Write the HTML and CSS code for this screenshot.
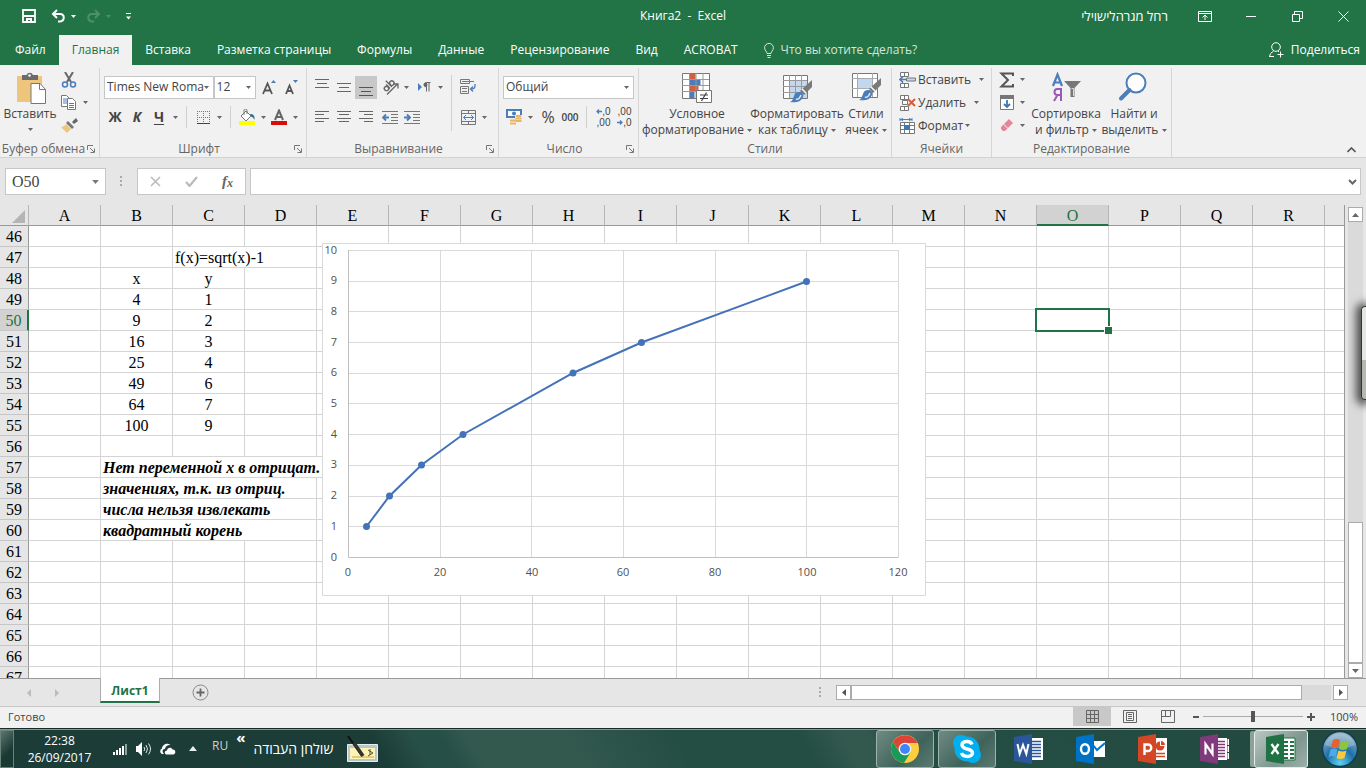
FILE: index.html
```html
<!DOCTYPE html>
<html lang="ru">
<head>
<meta charset="utf-8">
<title>Книга2 - Excel</title>
<link rel="stylesheet" href="styles.css">
</head>
<body>
<svg class="defs" width="0" height="0" aria-hidden="true">
  <defs>
    <symbol id="car" viewBox="0 0 5 3"><path d="M0 0h5L2.500 3z" fill="currentColor"/></symbol>
    <symbol id="launch" viewBox="0 0 8 8"><path d="M.5 5V.5H6M3 3l4 4M7.500 3.500v4h-4" fill="none" stroke="#777"/></symbol>
    <symbol id="brush" viewBox="0 0 24 24"><path d="M23 0v7l-8 8-4-4z" fill="#7a7a7a"/><path d="M13 9l4 4" stroke="#fff" stroke-width="1.500"/><path d="M10 12c3 0 5 2 4 5-2 5-8 6-13 5 3-1 3-4 4-6 1-3 2-4 5-4z" fill="#4a7ebb"/><path d="M7 19c2 1 4-1 5-4" fill="none" stroke="#dce8f5" stroke-width="1.500"/></symbol>
  </defs>
</svg>

<header class="titlebar">
  <div class="qat">
    <button aria-label="Сохранить"><svg width="14" height="14" viewBox="0 0 14 14"><path d="M1 1h12v12H1zM1 7h12" fill="none" stroke="#fff" stroke-width="1.800"/><path d="M4 9h6v5H8v-3H6v3H4z" fill="#fff"/></svg></button>
    <button aria-label="Отменить"><svg width="15" height="14" viewBox="0 0 15 14"><path d="M6 1L2 5l4 4M2 5h7c5 0 5 7 0 7.500H7" fill="none" stroke="#fff" stroke-width="2"/></svg></button>
    <button class="mini" aria-label="Список отмены"><svg width="5" height="3"><use href="#car"/></svg></button>
    <button class="dim" aria-label="Вернуть"><svg width="15" height="14" viewBox="0 0 15 14"><path d="M9 1l4 4-4 4M13 5H6c-5 0-5 7 0 7.500h2" fill="none" stroke="currentColor" stroke-width="2"/></svg></button>
    <button class="mini dim" aria-label="Список возврата"><svg width="5" height="3"><use href="#car"/></svg></button>
    <button aria-label="Настройка панели"><svg width="5" height="7" viewBox="0 0 5 7"><path d="M0 .5h5" stroke="#fff"/><path d="M0 3.500h5L2.500 6.500z" fill="#fff"/></svg></button>
  </div>
  <h1>Книга2&nbsp; -&nbsp; Excel</h1>
  <div class="win">
    <span lang="he" dir="rtl">רחל מגרהלישוילי</span>
    <button aria-label="Параметры ленты"><svg width="14" height="11" viewBox="0 0 14 11"><path d="M.5.5h13v10H.5zM.5 2.500h13M7 9V4.500M4.500 6.500L7 4l2.500 2.500" fill="none" stroke="#fff"/></svg></button>
    <button aria-label="Свернуть"><svg width="10" height="11"><path d="M0 5.500h10" stroke="#fff"/></svg></button>
    <button aria-label="Окно"><svg width="11" height="11" viewBox="0 0 11 11"><path d="M.5 3.500h7v7h-7zM2.500 3.500v-3h8v7h-3" fill="none" stroke="#fff"/></svg></button>
    <button aria-label="Закрыть"><svg width="11" height="11" viewBox="0 0 11 11"><path d="M.5.5l10 10M10.500.5l-10 10" fill="none" stroke="#fff"/></svg></button>
  </div>
</header>

<nav class="tabs">
  <button>Файл</button>
  <button class="on">Главная</button>
  <button>Вставка</button>
  <button>Разметка страницы</button>
  <button>Формулы</button>
  <button>Данные</button>
  <button>Рецензирование</button>
  <button>Вид</button>
  <button>ACROBAT</button>
  <button class="tell"><svg width="10" height="15" viewBox="0 0 10 15"><path d="M3 10.500C3 8.500.6 7.500.6 4.800a4.400 4.400 0 0 1 8.800 0C9.400 7.500 7 8.500 7 10.500zM3 12.500h4M3.500 14.500h3" fill="none" stroke="#d5e6da"/></svg>Что вы хотите сделать?</button>
  <button class="share"><svg width="16" height="16" viewBox="0 0 16 16"><circle cx="7" cy="5" r="4.300" fill="none" stroke="#fff"/><path d="M.5 15c.3-3 2-5 4-5.700M9 9l1 1M.5 14.500H5M11.500 9.500v6M8.500 12.500h6" fill="none" stroke="#fff"/></svg>Поделиться</button>
</nav>

<section class="ribbon">
  <div class="group g-clip">
    <div class="body">
      <button class="big"><svg width="32" height="32" viewBox="0 0 32 32"><path d="M3 4h25v26H3z" fill="#edc57c"/><path d="M8 8V3h4.500a3.500 3.500 0 0 1 6.500 0h5v5z" fill="#6b6b6b"/><circle cx="15.500" cy="3.500" r="1.300" fill="#fff"/><path d="M17 11.500h9l5.500 6v14H17z" fill="#fff" stroke="#777"/><path d="M25.500 11.500v6h6" fill="none" stroke="#777"/></svg><span>Вставить</span><i><svg width="5" height="3"><use href="#car"/></svg></i></button>
      <div class="col">
        <div class="line"><button class="ib" aria-label="Вырезать"><svg width="16" height="16" viewBox="0 0 16 16"><path d="M4 0l6 10M12 0L6 10" stroke="#666" stroke-width="2"/><circle cx="4" cy="12.500" r="2.500" fill="none" stroke="#4a7ebb" stroke-width="1.500"/><circle cx="12" cy="12.500" r="2.500" fill="none" stroke="#4a7ebb" stroke-width="1.500"/></svg></button></div>
        <div class="line"><button class="ib" aria-label="Копировать"><svg width="16" height="15" viewBox="0 0 16 15"><path d="M.5.500h5l3 3v8h-8z" fill="#fff" stroke="#777"/><path d="M2 4h4M2 6h4M2 8h4" stroke="#4a7ebb"/><path d="M6.500 3.500h5l3 3v8h-8z" fill="#fff" stroke="#777"/><path d="M8 8.500h5M8 10.500h5M8 12.500h5" stroke="#4a7ebb"/></svg></button><button class="cr" aria-label="Варианты копирования"><svg width="5" height="3"><use href="#car"/></svg></button></div>
        <div class="line"><button class="ib" aria-label="Формат по образцу"><svg width="17" height="15" viewBox="0 0 17 15"><path d="M15 0l2 3-4 3-2-2z" fill="#666"/><path d="M7 3l6 6-2 2-6-6z" fill="#777"/><path d="M5 6l5 5-4 4-6-6c2 0 4-1 5-3z" fill="#edc57c"/></svg></button></div>
      </div>
    </div>
    <footer><span>Буфер обмена</span><button aria-label="Буфер обмена, параметры"><svg width="8" height="8"><use href="#launch"/></svg></button></footer>
  </div>

  <div class="group g-font">
    <div class="body stack">
      <div class="row">
        <select class="sel w-font" aria-label="Шрифт"><option>Times New Roma</option></select><select class="sel w-size" aria-label="Размер"><option>12</option></select>
        <button class="ib ml" aria-label="Увеличить размер"><svg width="14" height="15" viewBox="0 0 14 15"><path d="M1 14L5.500 3.500 10 14M2.500 10.500h6" fill="none" stroke="#555" stroke-width="1.800"/><path d="M9 3l2.500-3L14 3z" fill="#4a7ebb"/></svg></button>
        <button class="ib" aria-label="Уменьшить размер"><svg width="14" height="15" viewBox="0 0 14 15"><path d="M2 14L5.500 5.500 9 14M3 11h5" fill="none" stroke="#555" stroke-width="1.800"/><path d="M9 0l2.500 3L14 0z" fill="#4a7ebb"/></svg></button>
      </div>
      <div class="row">
        <button class="ib b">Ж</button><button class="ib b it">К</button><button class="ib b un">Ч</button><button class="cr" aria-label="Виды подчёркивания"><svg width="5" height="3"><use href="#car"/></svg></button>
        <span class="sep"></span>
        <button class="ib" aria-label="Границы"><svg width="13" height="13" viewBox="0 0 13 13"><path d="M.5 0v12M6.500 0v12M12.500 0v12M0 .5h13M0 6.500h13" stroke="#777" stroke-dasharray="1 1"/><path d="M0 12.500h13" stroke="#444"/></svg></button><button class="cr" aria-label="Виды границ"><svg width="5" height="3"><use href="#car"/></svg></button>
        <span class="sep"></span>
        <button class="ib" aria-label="Заливка"><svg width="16" height="16" viewBox="0 0 16 16"><path d="M7 2l5 5-5 5-5-5z" fill="#fff" stroke="#777"/><path d="M5 6V1.500a1.500 1.500 0 0 1 3 0V5" fill="none" stroke="#777"/><path d="M11 5c3 0 5 1 4.500 6-1-2-1.500-3-3-3z" fill="#2e6d94"/><path d="M0 12h16v4H0z" fill="#ff0"/></svg></button><button class="cr" aria-label="Цвет заливки"><svg width="5" height="3"><use href="#car"/></svg></button>
        <button class="ib" aria-label="Цвет текста"><svg width="16" height="16" viewBox="0 0 16 16"><path d="M4 11L8 1.500 12 11M5.500 8h5" fill="none" stroke="#666" stroke-width="2"/><path d="M0 12h16v4H0z" fill="#d90d0d"/></svg></button><button class="cr" aria-label="Выбор цвета"><svg width="5" height="3"><use href="#car"/></svg></button>
      </div>
    </div>
    <footer><span>Шрифт</span><button aria-label="Шрифт, параметры"><svg width="8" height="8"><use href="#launch"/></svg></button></footer>
  </div>

  <div class="group g-align">
    <div class="body">
      <div class="stack">
        <div class="row">
          <button class="ib up" aria-label="По верхнему краю"><svg width="14" height="9" viewBox="0 0 14 9"><path d="M0 .5h14M2 4.500h10M0 8.500h14" stroke="#666"/></svg></button><button class="ib" aria-label="По середине"><svg width="14" height="9" viewBox="0 0 14 9"><path d="M0 .5h14M2 4.500h10M0 8.500h14" stroke="#666"/></svg></button><button class="ib on down" aria-label="По нижнему краю"><svg width="14" height="9" viewBox="0 0 14 9"><path d="M0 .5h14M2 4.500h10M0 8.500h14" stroke="#555"/></svg></button>
          <button class="ib ml" aria-label="Ориентация"><svg width="17" height="16" viewBox="0 0 17 16"><g transform="rotate(-45 7 7)" fill="none" stroke="#666" stroke-width="1.400"><circle cx="3.500" cy="7" r="2.200"/><path d="M6 4v5.500M8.500 1v8.500"/><circle cx="11" cy="7" r="2.200"/></g><path d="M5 15.500L15.500 5M11.500 5H16v4.500" fill="none" stroke="#666" stroke-width="1.300"/></svg></button><button class="cr" aria-label="Варианты ориентации"><svg width="5" height="3"><use href="#car"/></svg></button>
          <button class="ib ml" aria-label="Направление текста"><svg width="13" height="10" viewBox="0 0 13 10"><path d="M0 1l4 4-4 4z" fill="#4a7ebb"/><path d="M12.500.5H8.500a2 2 0 0 0 0 4.500V.5M8.500 1v8.500M11 .5v9" fill="none" stroke="#666"/><circle cx="7.500" cy="2.700" r="2" fill="#666"/></svg></button><button class="cr" aria-label="Варианты направления"><svg width="5" height="3"><use href="#car"/></svg></button>
        </div>
        <div class="row">
          <button class="ib" aria-label="По левому краю"><svg width="14" height="12" viewBox="0 0 14 12"><path d="M0 .5h14M0 3.500h9M0 7.500h14M0 10.500h9" stroke="#666"/></svg></button><button class="ib" aria-label="По центру"><svg width="14" height="12" viewBox="0 0 14 12"><path d="M0 .5h14M2 3.500h10M0 7.500h14M2 10.500h10" stroke="#666"/></svg></button><button class="ib" aria-label="По правому краю"><svg width="14" height="12" viewBox="0 0 14 12"><path d="M0 .5h14M5 3.500h9M0 7.500h14M5 10.500h9" stroke="#666"/></svg></button>
          <button class="ib ml" aria-label="Уменьшить отступ"><svg width="16" height="13" viewBox="0 0 16 13"><path d="M0 .5h16M9 3.500h7M9 6.500h7M9 9.500h7M0 12.500h16" stroke="#777"/><path d="M7 6.500H1M4 3.500l-3 3 3 3" fill="none" stroke="#4a7ebb" stroke-width="1.800"/></svg></button><button class="ib" aria-label="Увеличить отступ"><svg width="16" height="13" viewBox="0 0 16 13"><path d="M0 .5h16M9 3.500h7M9 6.500h7M9 9.500h7M0 12.500h16" stroke="#777"/><path d="M0 6.500h6M3 3.500l3 3-3 3" fill="none" stroke="#4a7ebb" stroke-width="1.800"/></svg></button>
        </div>
      </div>
      <span class="sep tall"></span>
      <div class="stack">
        <div class="row"><button class="ib" aria-label="Перенос текста"><svg width="16" height="16" viewBox="0 0 16 16"><path d="M.5.500h9v4h-9zM.5 7.500h8v7h-8zM2 2.500h12M2 9.500h5M2 12.500h5" fill="none" stroke="#777"/><path d="M15 5v2c0 2-1 3-4 3M13 7.500L10.500 10l2.500 2.500" fill="none" stroke="#4a7ebb" stroke-width="1.300"/></svg></button></div>
        <div class="row"><button class="ib" aria-label="Объединить"><svg width="15" height="15" viewBox="0 0 15 15"><path d="M.5.5h14v14H.5zM.5 3.500h14M.5 11.500h14M7.500 0v3M7.500 12v3" fill="none" stroke="#777"/><path d="M2.500 7.500h10M5 5L2.500 7.500 5 10M10 5l2.500 2.500L10 10" fill="none" stroke="#4a7ebb"/></svg></button><button class="cr" aria-label="Варианты объединения"><svg width="5" height="3"><use href="#car"/></svg></button></div>
      </div>
    </div>
    <footer><span>Выравнивание</span><button aria-label="Выравнивание, параметры"><svg width="8" height="8"><use href="#launch"/></svg></button></footer>
  </div>

  <div class="group g-num">
    <div class="body stack">
      <div class="row"><select class="sel w-num" aria-label="Числовой формат"><option>Общий</option></select></div>
      <div class="row">
        <button class="ib" aria-label="Денежный формат"><svg width="17" height="16" viewBox="0 0 17 16"><path d="M1 1h14v7H1z" fill="#fff" stroke="#4a7ebb" stroke-width="2"/><circle cx="8" cy="4.500" r="2" fill="#4a7ebb"/><path d="M9 6h7v8h-6v2H1v-4h8z" fill="#f1f1f1"/><ellipse cx="12.500" cy="7" rx="3" ry="1.200" fill="#e8b565"/><path d="M9.500 9.500h6M9.500 12h6M4 11.500h6M4 14.500h6" stroke="#e8b565" stroke-width="1.800"/></svg></button><button class="cr" aria-label="Выбор валюты"><svg width="5" height="3"><use href="#car"/></svg></button>
        <button class="ib ml pct">%</button><button class="ib zeros">000</button>
        <span class="sep"></span>
        <button class="ib dec" aria-label="Увеличить разрядность"><span><svg width="6" height="5" viewBox="0 0 6 5"><path d="M6 2.500H1M3 .5l-2 2 2 2" fill="none" stroke="#4a7ebb" stroke-width="1.300"/></svg>,0</span><span>,00</span></button><button class="ib dec" aria-label="Уменьшить разрядность"><span>,00</span><span><svg width="6" height="5" viewBox="0 0 6 5"><path d="M0 2.500h5M3 .5l2 2-2 2" fill="none" stroke="#4a7ebb" stroke-width="1.300"/></svg>,0</span></button>
      </div>
    </div>
    <footer><span>Число</span><button aria-label="Число, параметры"><svg width="8" height="8"><use href="#launch"/></svg></button></footer>
  </div>

  <div class="group g-style">
    <div class="body">
      <button class="big"><svg width="32" height="32" viewBox="0 0 32 32"><path d="M1.500 1.500h27v25h-27z" fill="#fff" stroke="#777"/><path d="M8.500 2h6v5h-6zM8.500 14h9v5h-9z" fill="#d0603f"/><path d="M8.500 8h11v5h-11zM8.500 20h5v6h-5z" fill="#4a7ebb"/><path d="M8.500 1v25M15 1v25M22 1v25M1 7.500h27M1 13.500h27M1 19.500h27" stroke="#999" fill="none"/><path d="M15.500 18.500h15v12h-15z" fill="#fff" stroke="#777"/><path d="M19 23h8M19 26.500h8M25.500 20.500l-5 8.500" stroke="#444" stroke-width="1.200"/></svg><span>Условное<br>форматирование <svg width="5" height="3"><use href="#car"/></svg></span></button>
      <button class="big"><svg width="32" height="32" viewBox="0 0 32 32"><path d="M2.500 3.500h24v23h-24z" fill="#fff" stroke="#777"/><path d="M8 9h18v17H8z" fill="#c3d7ee"/><path d="M8.500 3v23M14.500 3v23M20.500 3v23M2 8.500h24M2 14.500h24M2 20.500h24" stroke="#999" fill="none"/><svg x="8" y="8" width="24" height="24"><use href="#brush"/></svg></svg><span>Форматировать<br>как таблицу <svg width="5" height="3"><use href="#car"/></svg></span></button>
      <button class="big"><svg width="32" height="32" viewBox="0 0 32 32"><path d="M2.500 1.500h25v24h-25z" fill="#fff" stroke="#777"/><path d="M7.500 1v24M22.500 1v24M2 6.500h25M2 16.500h25" stroke="#aaa" fill="none"/><path d="M8 7h14v9H8z" fill="#c3d7ee"/><svg x="8" y="6" width="24" height="24"><use href="#brush"/></svg></svg><span>Стили<br>ячеек <svg width="5" height="3"><use href="#car"/></svg></span></button>
    </div>
    <footer><span>Стили</span></footer>
  </div>

  <div class="group g-cells">
    <div class="body">
      <div class="col">
        <button class="line cmd"><svg width="17" height="16" viewBox="0 0 17 16"><path d="M1.500.5h8v4h-8zM5.500.5v4M1.500 11.500h8v4h-8zM5.500 11.500v4M3.500 9.500v2" fill="#fff" stroke="#777"/><path d="M7.500 6h9v3h-9z" fill="#c3d7ee" stroke="#777"/><path d="M7 7.500H1M4 4.500l-3 3 3 3" fill="none" stroke="#4a7ebb" stroke-width="1.600"/></svg>Вставить<i class="far"><svg width="5" height="3"><use href="#car"/></svg></i></button>
        <button class="line cmd"><svg width="17" height="16" viewBox="0 0 17 16"><path d="M1.500.5h8v4h-8zM5.500.5v4M1.500 11.500h8v4h-8zM5.500 11.500v4M3.500 5.500h5v4h-5z" fill="#fff" stroke="#777"/><path d="M9 4l7 7M16 4l-7 7" stroke="#d0603f" stroke-width="2"/></svg>Удалить<i class="far"><svg width="5" height="3"><use href="#car"/></svg></i></button>
        <button class="line cmd"><svg width="17" height="16" viewBox="0 0 17 16"><path d="M1 1.500h12M1 0v3M13 0v3M4 0L2 1.500 4 3M10 0l2 1.500L10 3" fill="none" stroke="#4a7ebb"/><path d="M1.500 4.500h14v11h-14zM5.500 4.500v11M10.500 4.500v11M1.500 7.500h14M1.500 11.500h14" fill="#fff" stroke="#777"/><path d="M5 7h6v5H5z" fill="#3c76b5"/></svg>Формат<i><svg width="5" height="3"><use href="#car"/></svg></i></button>
      </div>
    </div>
    <footer><span>Ячейки</span></footer>
  </div>

  <div class="group g-edit">
    <div class="body">
      <div class="col">
        <div class="line"><button class="ib" aria-label="Сумма"><svg width="16" height="16" viewBox="0 0 16 16"><path d="M14 4V1.500H2.500L9 8l-6.500 6.500H14V12" fill="none" stroke="#555" stroke-width="2"/></svg></button><button class="cr" aria-label="Функции"><svg width="5" height="3"><use href="#car"/></svg></button></div>
        <div class="line"><button class="ib" aria-label="Заполнить"><svg width="14" height="15" viewBox="0 0 14 15"><path d="M.5.5h13v14H.5z" fill="#fff" stroke="#777"/><path d="M0 0h14v4H0z" fill="#777"/><path d="M7 5v7M4 9l3 3 3-3" fill="none" stroke="#3c76b5" stroke-width="1.800"/></svg></button><button class="cr" aria-label="Варианты заполнения"><svg width="5" height="3"><use href="#car"/></svg></button></div>
        <div class="line"><button class="ib" aria-label="Очистить"><svg width="14" height="13" viewBox="0 0 14 13"><path d="M9 0l4 4-5 5-4-4z" fill="#e5849a"/><path d="M3.500 5.500l4 4L5 12H3L1 10V8z" fill="#e5849a"/></svg></button><button class="cr" aria-label="Варианты очистки"><svg width="5" height="3"><use href="#car"/></svg></button></div>
      </div>
      <button class="big"><svg width="32" height="32" viewBox="0 0 32 32"><path d="M3 14L7.500 2.500 12 14M4.500 10.500h6" fill="none" stroke="#4a7ebb" stroke-width="2.200"/><path d="M11 29V17H7.500a3 3 0 0 0 0 6H11M7.500 23L4 29" fill="none" stroke="#9b59b6" stroke-width="2"/><path d="M14 9h17l-6.500 7v9h-4v-9z" fill="#777"/><path d="M21.500 16.500h2V24" stroke="#ddd" fill="none"/></svg><span>Сортировка<br>и фильтр <svg width="5" height="3"><use href="#car"/></svg></span></button>
      <button class="big"><svg width="32" height="32" viewBox="0 0 32 32"><circle cx="18" cy="11" r="9.500" fill="#fff" stroke="#4a7ebb" stroke-width="2"/><path d="M11.500 18L3 26.500" stroke="#4a7ebb" stroke-width="4" stroke-linecap="round"/></svg><span>Найти и<br>выделить <svg width="5" height="3"><use href="#car"/></svg></span></button>
    </div>
    <footer><span>Редактирование</span></footer>
  </div>
  <button class="collapse" aria-label="Свернуть ленту"><svg width="9" height="6" viewBox="0 0 9 6"><path d="M.5 5l4-4 4 4" fill="none" stroke="#555" stroke-width="1.600"/></svg></button>
</section>

<section class="formula">
  <div class="namebox"><input value="O50" aria-label="Имя ячейки"><svg width="7" height="4"><use href="#car"/></svg></div>
  <svg class="dots" width="3" height="11"><path d="M0 0h2v2H0zM0 4h2v2H0zM0 8h2v2H0z" fill="#aaa"/></svg>
  <div class="fx">
    <button aria-label="Отмена"><svg width="11" height="11" viewBox="0 0 11 11"><path d="M1 1l9 9M10 1l-9 9" stroke="#bbb" stroke-width="1.600"/></svg></button>
    <button aria-label="Ввод"><svg width="13" height="11" viewBox="0 0 13 11"><path d="M1 6l3.500 4L12 1" fill="none" stroke="#bbb" stroke-width="2.200"/></svg></button>
    <button class="fn" aria-label="Вставить функцию">f<small>x</small></button>
  </div>
  <div class="entry"><input aria-label="Строка формул"><svg width="9" height="6" viewBox="0 0 9 6"><path d="M1 1l3.500 3.500L8 1" fill="none" stroke="#666" stroke-width="2"/></svg></div>
</section>

<main class="work">
  <div class="sheet">
    <table>
      <colgroup><col class="c0"><col class="c" span="18"><col></colgroup>
      <thead><tr><th class="corner"><svg width="13" height="13"><path d="M13 0v13H0z" fill="#b5b5b5"/></svg></th><th>A<th>B<th>C<th>D<th>E<th>F<th>G<th>H<th>I<th>J<th>K<th>L<th>M<th>N<th class="on">O<th>P<th>Q<th>R<th></tr></thead>
      <tbody>
        <tr><th>46<td><td><td><td><td><td><td><td><td><td><td><td><td><td><td><td><td><td><td></tr>
        <tr><th>47<td><td><td colspan="2" class="t">f(x)=sqrt(x)-1<td><td><td><td><td><td><td><td><td><td><td><td><td><td><td></tr>
        <tr><th>48<td><td>x<td>y<td><td><td><td><td><td><td><td><td><td><td><td><td><td><td><td></tr>
        <tr><th>49<td><td>4<td>1<td><td><td><td><td><td><td><td><td><td><td><td><td><td><td><td></tr>
        <tr><th class="on">50<td><td>9<td>2<td><td><td><td><td><td><td><td><td><td><td><td class="cur"><td><td><td><td></tr>
        <tr><th>51<td><td>16<td>3<td><td><td><td><td><td><td><td><td><td><td><td><td><td><td><td></tr>
        <tr><th>52<td><td>25<td>4<td><td><td><td><td><td><td><td><td><td><td><td><td><td><td><td></tr>
        <tr><th>53<td><td>49<td>6<td><td><td><td><td><td><td><td><td><td><td><td><td><td><td><td></tr>
        <tr><th>54<td><td>64<td>7<td><td><td><td><td><td><td><td><td><td><td><td><td><td><td><td></tr>
        <tr><th>55<td><td>100<td>9<td><td><td><td><td><td><td><td><td><td><td><td><td><td><td><td></tr>
        <tr><th>56<td><td><td><td><td><td><td><td><td><td><td><td><td><td><td><td><td><td><td></tr>
        <tr><th>57<td><td colspan="4" class="t note">Нет переменной х в отрицат.<td><td><td><td><td><td><td><td><td><td><td><td><td><td></tr>
        <tr><th>58<td><td colspan="3" class="t note">значениях, т.к. из отриц.<td><td><td><td><td><td><td><td><td><td><td><td><td><td><td></tr>
        <tr><th>59<td><td colspan="3" class="t note">числа нельзя извлекать<td><td><td><td><td><td><td><td><td><td><td><td><td><td><td></tr>
        <tr><th>60<td><td colspan="3" class="t note">квадратный корень<td><td><td><td><td><td><td><td><td><td><td><td><td><td><td></tr>
        <tr><th>61<td><td><td><td><td><td><td><td><td><td><td><td><td><td><td><td><td><td><td></tr>
        <tr><th>62<td><td><td><td><td><td><td><td><td><td><td><td><td><td><td><td><td><td><td></tr>
        <tr><th>63<td><td><td><td><td><td><td><td><td><td><td><td><td><td><td><td><td><td><td></tr>
        <tr><th>64<td><td><td><td><td><td><td><td><td><td><td><td><td><td><td><td><td><td><td></tr>
        <tr><th>65<td><td><td><td><td><td><td><td><td><td><td><td><td><td><td><td><td><td><td></tr>
        <tr><th>66<td><td><td><td><td><td><td><td><td><td><td><td><td><td><td><td><td><td><td></tr>
        <tr><th>67<td><td><td><td><td><td><td><td><td><td><td><td><td><td><td><td><td><td><td></tr>
      </tbody>
    </table>
    <svg class="chart" width="604" height="353" viewBox="0 0 604 353" role="img" aria-label="График f(x)">
      <path d="M.5.5h603v352H.5z" fill="#fff" stroke="#d9d9d9"/>
      <path d="M26 7.500h550M26 38.500h550M26 68.500h550M26 99.500h550M26 130.500h550M26 160.500h550M26 191.500h550M26 222.500h550M26 253.500h550M26 283.500h550M118.500 7v307M209.500 7v307M301.500 7v307M393.500 7v307M484.500 7v307M576.500 7v307" stroke="#d9d9d9"/>
      <path d="M26.500 7v307.500h550" fill="none" stroke="#bfbfbf"/>
      <g class="ay"><text x="15" y="11">10</text><text x="15" y="41">9</text><text x="15" y="72">8</text><text x="15" y="103">7</text><text x="15" y="133">6</text><text x="15" y="164">5</text><text x="15" y="195">4</text><text x="15" y="225">3</text><text x="15" y="256">2</text><text x="15" y="287">1</text><text x="15" y="318">0</text></g>
      <g class="ax"><text x="26" y="333">0</text><text x="118" y="333">20</text><text x="210" y="333">40</text><text x="301" y="333">60</text><text x="393" y="333">80</text><text x="485" y="333">100</text><text x="576" y="333">120</text></g>
      <polyline points="44.500,283.500 67.500,253 99.500,222 141,191.500 251,130 319.500,99.500 484.500,38.500" fill="none" stroke="#4472b8" stroke-width="2"/>
      <g fill="#4472b8"><circle cx="44.500" cy="283.500" r="3.500"/><circle cx="67.500" cy="253" r="3.500"/><circle cx="99.500" cy="222" r="3.500"/><circle cx="141" cy="191.500" r="3.500"/><circle cx="251" cy="130" r="3.500"/><circle cx="319.500" cy="99.500" r="3.500"/><circle cx="484.500" cy="38.500" r="3.500"/></g>
    </svg>
  </div>
  <div class="vscroll">
    <button aria-label="Вверх"><svg width="7" height="4"><path d="M0 4h7L3.500 0z" fill="#666"/></svg></button>
    <div class="track"><div class="thumb"></div></div>
    <button aria-label="Вниз"><svg width="7" height="4"><path d="M0 0h7L3.500 4z" fill="#666"/></svg></button>
  </div>
  <div class="edge"></div>
</main>

<div class="sheetbar">
  <div class="navs"><button aria-label="Назад"><svg width="4" height="8"><path d="M4 0v8L0 4z" fill="#bbb"/></svg></button><button aria-label="Вперёд"><svg width="4" height="8"><path d="M0 0v8l4-4z" fill="#bbb"/></svg></button></div>
  <button class="stab">Лист1</button>
  <button class="add" aria-label="Новый лист"><svg width="17" height="17" viewBox="0 0 17 17"><circle cx="8.500" cy="8.500" r="7.500" fill="none" stroke="#888"/><path d="M4.500 8.500h8M8.500 4.500v8" stroke="#666" stroke-width="1.800"/></svg></button>
  <svg class="dots" width="3" height="11"><path d="M0 0h2v2H0zM0 4h2v2H0zM0 8h2v2H0z" fill="#aaa"/></svg>
  <div class="hscroll">
    <button aria-label="Влево"><svg width="4" height="7"><path d="M4 0v7L0 3.500z" fill="#555"/></svg></button>
    <div class="track"><div class="thumb"></div></div>
    <button aria-label="Вправо"><svg width="4" height="7"><path d="M0 0v7l4-3.500z" fill="#555"/></svg></button>
  </div>
</div>

<div class="status">
  <span class="ready">Готово</span>
  <button class="on" aria-label="Обычный"><svg width="13" height="13" viewBox="0 0 13 13"><path d="M.5.5h12v12H.5zM4.500 0v13M8.500 0v13M0 4.500h13M0 8.500h13" fill="none" stroke="#666"/></svg></button>
  <button aria-label="Разметка страницы"><svg width="14" height="13" viewBox="0 0 14 13"><path d="M.5.5h13v12H.5zM3.500 2.500h7v8h-7zM5 4.500h4M5 6.500h4M5 8.500h4" fill="none" stroke="#666"/></svg></button>
  <button aria-label="Страничный"><svg width="14" height="13" viewBox="0 0 14 13"><path d="M.5.5h13v12H.5zM4.500 0v6.500h5V0M0 6.500h5" fill="none" stroke="#666"/></svg></button>
  <button class="z" aria-label="Уменьшить"><svg width="6" height="8"><path d="M0 4h6" stroke="#555" stroke-width="2"/></svg></button>
  <input type="range" min="0" max="100" value="50" aria-label="Масштаб">
  <button class="z" aria-label="Увеличить"><svg width="8" height="8"><path d="M0 4h8M4 0v8" stroke="#555" stroke-width="2"/></svg></button>
  <span class="pc">100%</span>
</div>

<footer class="taskbar">
  <button class="peek" aria-label="Показать рабочий стол"></button>
  <time>22:38<br>26/09/2017</time>
  <div class="tray">
    <svg width="15" height="12" viewBox="0 0 15 12"><path d="M0 9h2v3H0zM3 7h2v5H3zM6 5h2v7H6zM9 3h2v9H9z" fill="#fff"/><path d="M12 1h2v11h-2z" fill="#8fa39d"/></svg>
    <svg width="16" height="14" viewBox="0 0 16 14"><path d="M0 4h2l4-4v14l-4-4H0z" fill="#fff"/><path d="M8 5q1.500 2 0 4M10 3q3 4 0 8M12.500 1.500q4 5.500 0 11" fill="none" stroke="#dfe8e5"/></svg>
    <svg width="16" height="12" viewBox="0 0 16 12"><path d="M2 11a3 3 0 0 1 0-5.500C2 2 7-1 10.500 2c-4 0-5 2-5.500 4-3 0-3 3-1 5zM6 11.500c-2-1-1.500-4 1-4 0-3 4.500-4 5.500-1 3-.5 4 4 1 5z" fill="#fff"/></svg>
    <svg width="8" height="5"><path d="M0 5h8L4 0z" fill="#e8f0ec"/></svg>
  </div>
  <span class="ru">RU</span>
  <span class="chev">«</span>
  <span class="desk" lang="he" dir="rtl">שולחן העבודה</span>
  <svg class="pen" width="32" height="28" viewBox="0 0 32 28"><path d="M.5 9.500h30v17H.5z" fill="#b9c6cc" stroke="#e6eef0"/><path d="M3 13h25v11H3z" fill="#fdf3b4"/><path d="M5 22h22" stroke="#c7a742"/><path d="M21 15l5 3-5 3M23 14v6" stroke="#5d5030" fill="none"/><path d="M1 1l5 7 9 13" stroke="#111" stroke-width="2"/><path d="M7 8l9 13" stroke="#333" stroke-width="3.500"/></svg>
  <div class="apps">
    <button class="run" aria-label="Chrome"><svg width="30" height="30" viewBox="0 0 30 30"><circle cx="15" cy="15" r="14" fill="#ffcd40"/><path d="M2.900 8a14 14 0 0 1 24.600 1H15a6 6 0 0 0-5.500 8.500z" fill="#db4437"/><path d="M2.900 8A14 14 0 0 0 14 29l6.500-10.500L15 21l-5.500-3z" fill="#1a9a59"/><circle cx="15" cy="15" r="6.300" fill="#f4f4f4"/><circle cx="15" cy="15" r="5" fill="#4285f4"/></svg></button>
    <button class="run" aria-label="Skype"><svg width="30" height="30" viewBox="0 0 30 30"><circle cx="15" cy="15" r="12.500" fill="#00aff0"/><circle cx="9" cy="9" r="8" fill="#00aff0"/><circle cx="21" cy="21" r="8" fill="#00aff0"/><path d="M20 10.500C18.500 6.500 10 6.500 10 11c0 5 10.500 3 10.500 8 0 4.500-9.500 4.500-11 0" fill="none" stroke="#fff" stroke-width="3.500"/></svg></button>
    <button aria-label="Word"><svg width="30" height="30" viewBox="0 0 30 30"><path d="M17 4h12v22H17z" fill="#fff"/><path d="M17 7.500h10M17 10.500h10M17 13.500h10M17 16.500h10M17 19.500h10M17 22.500h10" stroke="#2b579a" stroke-width="1.500"/><path d="M0 3l18-3v30L0 27z" fill="#2b579a"/><path d="M3.500 10l2.200 10L9 11l3.300 9L14.500 10" fill="none" stroke="#fff" stroke-width="2"/></svg></button>
    <button aria-label="Outlook"><svg width="30" height="30" viewBox="0 0 30 30"><path d="M17 7h12v16H17z" fill="#fff"/><path d="M17 11l4 5 8-7" fill="none" stroke="#0072c6" stroke-width="2"/><path d="M0 3l18-3v30L0 27z" fill="#0072c6"/><ellipse cx="9" cy="15" rx="4" ry="4.800" fill="none" stroke="#fff" stroke-width="2.400"/></svg></button>
    <button aria-label="PowerPoint"><svg width="30" height="30" viewBox="0 0 30 30"><path d="M17 4h12v22H17z" fill="#fff"/><circle cx="22" cy="12" r="4.500" fill="#d24726"/><path d="M22.500 11.500V6.500a5 5 0 0 1 5 5z" fill="#d24726" stroke="#fff"/><path d="M18 19.500h9M18 22.500h9" stroke="#d24726" stroke-width="1.500"/><path d="M0 3l18-3v30L0 27z" fill="#d24726"/><path d="M6.500 21V10.500H10a3.200 3.200 0 0 1 0 6.500H7" fill="none" stroke="#fff" stroke-width="2.400"/></svg></button>
    <button aria-label="OneNote"><svg width="30" height="30" viewBox="0 0 30 30"><path d="M17 4h10v22H17zM27.500 5h1.500v6h-1.500zM27.500 12h1.500v6h-1.500zM27.500 19h1.500v6h-1.500z" fill="#fff"/><path d="M17 7.500h8M17 10.500h8M17 13.500h8M17 16.500h8M17 19.500h8M17 22.500h8" stroke="#80397b" stroke-width="1.500"/><path d="M0 3l18-3v30L0 27z" fill="#80397b"/><path d="M5.500 20.500V10l7 10V9.500" fill="none" stroke="#fff" stroke-width="2.200"/></svg></button>
    <button class="run active" aria-label="Excel"><svg width="30" height="30" viewBox="0 0 30 30"><path d="M17 4h12v22H17z" fill="#fff" stroke="#207245"/><path d="M18 8h4M24 8h4M18 12h4M24 12h4M18 16h4M24 16h4M18 20h4M24 20h4M18 24h4M24 24h4" stroke="#207245" stroke-width="1.800"/><path d="M0 3l18-3v30L0 27z" fill="#207245"/><path d="M5.500 10l7 10M12.500 10l-7 10" stroke="#fff" stroke-width="2.300"/></svg></button>
    <button class="orb" aria-label="Пуск"><svg width="38" height="38" viewBox="0 0 38 38"><defs><radialGradient id="o" cx=".5" cy=".9" r=".9"><stop offset="0" stop-color="#5fd0f2"/><stop offset=".45" stop-color="#1d6fa8"/><stop offset="1" stop-color="#9fb9c6"/></radialGradient></defs><circle cx="19" cy="19" r="17.500" fill="url(#o)" stroke="#0f3e52" stroke-width="1.500"/><path d="M4 15a15.500 15.500 0 0 1 30 0q-15 7-30 0z" fill="#fff" opacity=".25"/><path d="M12 10q4-2 7 0l-2 8q-4-2-7 0z" fill="#e8602c"/><path d="M20 11q4 2 8 0l-2 8q-4 2-8 0z" fill="#8cc63f"/><path d="M9.500 19.500q4-2 7 0l-2 7.500q-3-2-7 0z" fill="#4fa8e8"/><path d="M17.500 20.500q4 2 8 0l-2 7.500q-4 2-8 0z" fill="#fcc93a"/></svg></button>
  </div>
</footer>
</body>
</html>
```
FILE: styles.css
```css
* { box-sizing: border-box; }
body {
  margin: 0;
  height: 100vh;
  display: flex;
  flex-direction: column;
  overflow: hidden;
  background: #e6e6e6;
  color: #444;
  font: 12px/16px "Open Sans", "Noto Sans", "DejaVu Sans", sans-serif;
}
button, input, select { font: inherit; color: inherit; }
button {
  display: flex;
  align-items: center;
  justify-content: center;
  flex: none;
  padding: 0;
  border: 0;
  background: none;
}
svg { display: block; flex: none; }
.defs { position: absolute; }

/* Title bar */
.titlebar {
  display: grid;
  grid-template-columns: 1fr auto 1fr;
  align-items: center;
  height: 35px;
  padding-bottom: 3px;
  background: #227447;
  color: #fff;
}
.titlebar h1 { margin: 0; font-size: 12px; font-weight: 400; }
.qat { display: flex; padding-left: 18px; }
.qat button { width: 22px; height: 22px; margin-right: 7px; }
.qat button:nth-child(2), .qat button:nth-child(4) { margin-right: 0; }
.qat .mini { width: 8px; margin-right: 5px; }
.qat .dim { color: #4d9069; }
.win { display: flex; justify-content: flex-end; align-items: center; }
.win span { padding-right: 14px; font-size: 13px; }
.win button { width: 46px; height: 28px; }

/* Tabs */
.tabs { display: flex; height: 30px; padding-left: 2px; background: #227447; }
.tabs button { padding: 0 13px; color: #fff; }
.tabs .on { background: #f1f1f1; color: #217346; }
.tabs .tell { gap: 7px; color: #d5e6da; }
.tabs .share { gap: 6px; margin-left: auto; padding-right: 6px; }

/* Ribbon */
.ribbon {
  display: flex;
  height: 93px;
  padding-top: 3px;
  background: #f1f1f1;
  border-bottom: 1px solid #d2d2d2;
}
.group { display: flex; flex-direction: column; flex: none; padding: 0 4px; border-right: 1px solid #d6d6d6; }
.body { display: flex; flex: 1; min-height: 0; }
.group footer { display: flex; align-items: center; height: 16px; color: #666; }
.group footer span { flex: 1; text-align: center; white-space: nowrap; }
.group footer button { width: 8px; height: 16px; }
.g-clip { width: 100px; padding-left: 0; }
.g-font { width: 207px; }
.g-align { width: 192px; }
.g-num { width: 140px; }
.g-style { width: 253px; }
.g-cells { width: 100px; }
.g-edit { width: 180px; }
.stack { display: flex; flex-direction: column; gap: 6px; padding-top: 7px; }
.row { display: flex; align-items: center; height: 24px; }
.col { display: flex; flex-direction: column; }
.line { display: flex; align-items: center; height: 23px; }
.ib { width: 22px; height: 23px; }
.ib.on { background: #c8c8c8; }
.ib.up { padding-bottom: 8px; }
.ib.down { padding-top: 8px; }
.ib.ml { margin-left: 2px; }
.cr { width: 10px; height: 22px; color: #666; }
.sep { display: flex; justify-content: center; width: 12px; height: 22px; }
.sep::before { content: ""; width: 1px; background: #d0d0d0; }
.sep.tall { height: 56px; margin-top: 7px; }
.b { font-size: 14px; font-weight: 700; }
.it { font-style: italic; }
.un { text-decoration: underline; text-underline-offset: 2px; }
.pct { font-size: 16px; }
.zeros { font-size: 10px; font-weight: 600; }
.dec { flex-direction: column; align-items: center; font: 10px/11px "Liberation Sans", sans-serif; width: 21px; }
.dec span { display: flex; align-items: center; justify-content: flex-end; width: 16px; }
.sel {
  appearance: none;
  height: 23px;
  padding: 0 2px;
  border: 1px solid #c6c6c6;
  border-radius: 0;
  background: #fff url("data:image/svg+xml,%3Csvg xmlns='http://www.w3.org/2000/svg' width='5' height='3'%3E%3Cpath d='M0 0h5L2.500 3z' fill='%23666'/%3E%3C/svg%3E") no-repeat right 4px center;
}
.w-font { width: 111px; }
.w-size { width: 43px; }
.w-num { width: 131px; }
.big { display: flex; flex-direction: column; justify-content: flex-start; padding-top: 4px; }
.big > svg { margin-bottom: 2px; }
.big span { text-align: center; white-space: nowrap; }
.big span svg { display: inline-block; vertical-align: middle; color: #666; }
.big i { height: 14px; padding-top: 6px; color: #666; }
.g-clip .big { width: 60px; }
.g-clip .body > .col { margin-left: -2px; }
.g-style .big { width: 108px; }
.g-style .big:nth-child(2) { width: 92px; }
.g-style .big:nth-child(3) { width: 46px; }
.g-edit .big { width: 68px; }
.g-edit .col { margin-right: 4px; }
.g-edit .cr { width: 8px; margin-right: 2px; }
.cmd { gap: 2px; justify-content: flex-start; padding-left: 3px; }
.cmd i.far { margin-left: 6px; }
.cmd i { color: #666; }
.collapse { align-self: flex-end; margin-left: auto; margin-right: 10px; height: 14px; }

/* Formula bar */
.formula { display: flex; align-items: center; height: 47px; padding: 0 5px; }
.namebox, .fx, .entry { display: flex; align-items: center; height: 27px; background: #fff; border: 1px solid #c6c6c6; }
.formula input { border: 0; outline: 0; padding: 0; min-width: 0; flex: 1; background: none; font: 16px "Liberation Serif", serif; }
.namebox { width: 101px; padding: 0 6px; color: #777; }
.namebox input { color: #444; }
.formula .dots { margin: 0 14px; }
.fx { width: 109px; justify-content: space-around; margin-right: 4px; }
.fx .fn { font: italic 700 15px "Liberation Serif", serif; color: #666; }
.fx small { font-size: 12px; padding-top: 3px; }
.entry { flex: 1; padding: 0 3px; }

/* Sheet */
.work { position: relative; display: flex; flex: 1; min-height: 0; }
.sheet {
  position: relative;
  flex: 1;
  min-width: 0;
  overflow: hidden;
  background: #fff;
  border-right: 1px solid #999;
  color: #000;
  font: 16px/18px "Liberation Serif", serif;
}
table { width: 100%; table-layout: fixed; border-collapse: separate; border-spacing: 0; }
.c0 { width: 29px; }
.c { width: 72px; }
th, td { height: 21px; padding: 2px 0 0; font-weight: 400; text-align: center; white-space: nowrap; overflow: hidden; }
td { border: 0 solid #d4d4d4; border-width: 0 1px 1px 0; }
td:last-child { border-right: 0; }
th { background: #e6e6e6; border: 0 solid #999; border-width: 0 1px 1px 0; }
thead th { border-right-color: #b5b5b5; }
thead th:last-child { border-right: 0; }
tbody th { border-bottom-color: #c6c6c6; }
.corner svg { margin-left: 12px; }
th.on { background: #d2d2d2; color: #217346; }
thead th.on { border-bottom: 2px solid #217346; line-height: 17px; }
tbody th.on { border-right: 2px solid #217346; }
.t { padding-left: 2px; text-align: left; }
.note { font-weight: 700; font-style: italic; }
.cur { position: relative; overflow: visible; }
.cur::before { content: ""; position: absolute; inset: -2px; border: 2px solid #217346; }
.cur::after { content: ""; position: absolute; right: -4px; bottom: -4px; width: 7px; height: 7px; background: #217346; border: 1px solid #fff; border-width: 1px 0 0 1px; }
.chart { position: absolute; left: 322px; top: 38px; }
.chart text { font: 11px "Open Sans", sans-serif; fill: #505050; }
.ay text { text-anchor: end; }
.ax text { text-anchor: middle; }

/* Scroll bars */
.vscroll { display: flex; flex-direction: column; width: 15px; margin: 2px 3px 0; }
.vscroll button, .hscroll button { width: 15px; height: 15px; background: #fff; border: 1px solid #ababab; }
.track { display: flex; flex: 1; background: #dadada; }
.thumb { background: #fff; border: 1px solid #ababab; }
.vscroll .track { flex-direction: column; justify-content: flex-end; }
.vscroll .thumb { height: 32%; }
.edge {
  position: absolute;
  right: 0;
  top: 101px;
  width: 5px;
  height: 94px;
  border: 1px solid #333;
  border-right: 0;
  border-radius: 4px 0 0 4px;
  background: linear-gradient(#e4e7e4 0 58%, #b5b8ae 58%);
  box-shadow: -1px 1px 9px 4px rgba(0, 0, 0, .65);
}

/* Sheet tabs */
.sheetbar { display: flex; align-items: center; height: 28px; border-top: 1px solid #999; }
.navs { display: flex; gap: 24px; width: 100px; padding-left: 27px; }
.stab {
  align-self: flex-start;
  height: 25px;
  width: 60px;
  margin-top: -1px;
  padding-top: 2px;
  background: #fff;
  border: 1px solid #ababab;
  border-width: 0 1px 2px;
  border-bottom-color: #217346;
  color: #217346;
  font-weight: 700;
}
.add { margin-left: 32px; }
.sheetbar .dots { margin-left: auto; margin-right: 14px; }
.hscroll { display: flex; width: 38%; max-width: 512px; margin-right: 18px; }
.hscroll .track { margin-right: 2px; }
.hscroll .thumb { width: 94%; }

/* Status bar */
.status { display: flex; align-items: center; height: 22px; padding: 0 8px 2px; background: #f1f1f1; border-top: 1px solid #c6c6c6; font-size: 11px; }
.ready { margin-right: auto; }
.status button { width: 38px; height: 19px; }
.status .on { background: #c8c8c8; }
.status .z { width: 15px; }
.status button + .z { margin-left: 1px; }
.pc { width: 40px; text-align: right; }
input[type="range"] { appearance: none; width: 100px; height: 16px; margin: 0; background: linear-gradient(#aaa, #aaa) center / 100% 1px no-repeat; }
input[type="range"]::-webkit-slider-thumb { appearance: none; width: 4px; height: 11px; background: #555; }

/* Taskbar */
.taskbar {
  display: flex;
  align-items: center;
  height: 40px;
  color: #fff;
  border-top: 1px solid #1a2a26;
  box-shadow: inset 0 1px #7f9b92;
  background: linear-gradient(60deg, #1c3c37 0 28%, #264f47 31% 33%, #33594f 35% 42%, #244d44 50% 59%, #33594f 62% 64%, #244d44 65% 72%, #21493f 100%);
}
.peek { width: 14px; height: 38px; border: 1px solid #6b827b; background: linear-gradient(135deg, #5d756f, #1b3933 60%); }
time { width: 91px; text-align: center; line-height: 17px; }
.tray { display: flex; align-items: center; gap: 8px; padding-left: 8px; }
.tray svg:last-child { margin-left: 5px; }
.ru { margin: 0 8px 5px 15px; color: #c9d4d0; }
.chev { align-self: flex-start; font-size: 15px; font-weight: 700; }
.desk { margin-left: 8px; font-size: 14px; }
.pen { margin: 0 14px; }
.apps { display: flex; align-items: center; margin-left: auto; gap: 4px; padding-right: 7px; }
.apps button { width: 58px; height: 38px; }
.apps .run { border: 1px solid #9fb3ad; border-radius: 3px; background: linear-gradient(135deg, #6f8b83, #3f635a 60%, #5b7a71); }
.apps .active { width: 54px; margin-left: 6px; margin-right: 9px; border-color: #e3ece8; background: linear-gradient(135deg, #b9c8c3, #7d968e 60%, #9db0aa); box-shadow: -5px 0 0 -1px #8ba29b; }
.apps .orb { width: 38px; }
```
